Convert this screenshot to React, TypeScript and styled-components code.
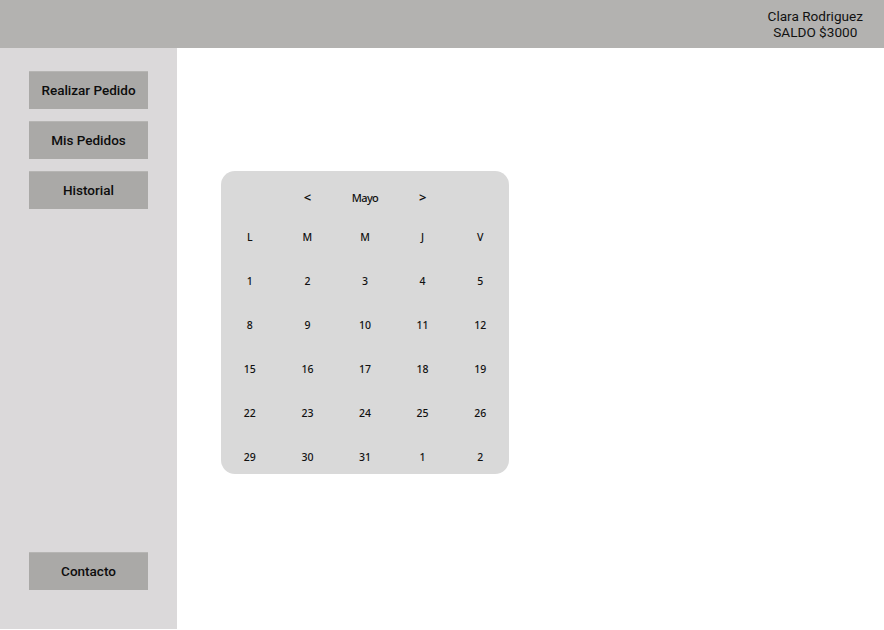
import React from "react";
import styled, { createGlobalStyle } from "styled-components";

const Global = createGlobalStyle`
  html, body { margin: 0; padding: 0; background: #ffffff; }
  body { font-family: Roboto, "Liberation Sans", sans-serif; }
`;

const Page = styled.div`
  width: 884px;
  height: 629px;
  display: flex;
  flex-direction: column;
`;

const TopBar = styled.header`
  height: 48px;
  flex: none;
  background: #b3b2b0;
  display: flex;
  justify-content: flex-end;
  align-items: center;
  padding-right: 21px;
`;

const UserInfo = styled.div`
  text-align: center;
  font-family: Roboto, "Liberation Sans", sans-serif;
  font-size: 13.6px;
  line-height: 16px;
  color: #111;
`;

const Body = styled.div`
  flex: 1;
  display: flex;
  min-height: 0;
`;

const Sidebar = styled.nav`
  width: 177px;
  flex: none;
  background: #dbd9da;
  display: flex;
  flex-direction: column;
  align-items: center;
  padding: 23px 0 39px;
  box-sizing: border-box;
  gap: 12px;
`;

const Spacer = styled.div`
  flex: 1;
`;

const NavButton = styled.button`
  width: 119px;
  height: 38px;
  border: none;
  border-top: 1px solid #b6b5b3;
  background: #aaa9a7;
  font-family: Roboto, "Liberation Sans", sans-serif;
  font-weight: 500;
  font-size: 13.5px;
  color: #0d0d0d;
  padding: 0 0 2px;
  cursor: pointer;
`;

const Main = styled.main`
  flex: 1;
  padding: 123px 0 0 44px;
`;

const Calendar = styled.div`
  width: 288px;
  height: 303px;
  box-sizing: border-box;
  background: #d9d9d9;
  border-radius: 14px;
  padding-top: 8px;
  font-family: "Noto Sans", "Open Sans", sans-serif;
  font-size: 10.5px;
  font-weight: 500;
  color: #111;
`;

const Grid = styled.div<{ $rowH: number }>`
  display: grid;
  grid-template-columns: repeat(5, 1fr);
  grid-auto-rows: ${(p) => p.$rowH}px;
  row-gap: 10px;
`;

const Cell = styled.div<{ $col?: number }>`
  display: flex;
  align-items: center;
  justify-content: center;
  ${(p) => (p.$col ? `grid-column: ${p.$col};` : "")}
`;

const Arrow = styled(Cell)`
  font-size: 13px;
  font-weight: 600;
`;

const Month = styled(Cell)`
  letter-spacing: -0.6px;
  font-size: 11px;
`;

const HeaderRow = styled.div`
  margin-bottom: 5px;
`;

const days = ["L", "M", "M", "J", "V"];
const dates = [
  1, 2, 3, 4, 5, 8, 9, 10, 11, 12, 15, 16, 17, 18, 19, 22, 23, 24, 25, 26, 29, 30, 31, 1, 2,
];

export default function App() {
  return (
    <Page>
      <Global />
      <TopBar>
        <UserInfo>
          Clara Rodriguez
          <br />
          SALDO $3000
        </UserInfo>
      </TopBar>
      <Body>
        <Sidebar>
          <NavButton>Realizar Pedido</NavButton>
          <NavButton>Mis Pedidos</NavButton>
          <NavButton>Historial</NavButton>
          <Spacer />
          <NavButton>Contacto</NavButton>
        </Sidebar>
        <Main>
          <Calendar>
            <HeaderRow>
              <Grid $rowH={36}>
                <Arrow $col={2}>&lt;</Arrow>
                <Month $col={3}>Mayo</Month>
                <Arrow $col={4}>&gt;</Arrow>
              </Grid>
            </HeaderRow>
            <Grid $rowH={34}>
              {days.map((d, i) => (
                <Cell key={"d" + i}>{d}</Cell>
              ))}
              {dates.map((d, i) => (
                <Cell key={"n" + i}>{d}</Cell>
              ))}
            </Grid>
          </Calendar>
        </Main>
      </Body>
    </Page>
  );
}
